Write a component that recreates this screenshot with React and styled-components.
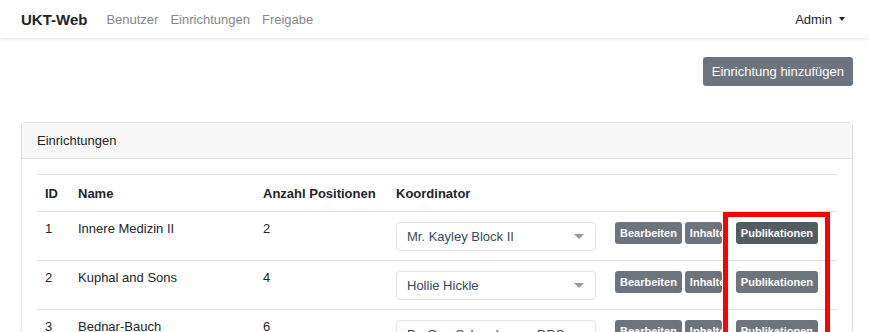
import styled, { createGlobalStyle } from "styled-components";

const GlobalStyle = createGlobalStyle`
  html, body {
    margin: 0;
    padding: 0;
    background: #fff;
    font-family: "Liberation Sans", Arial, sans-serif;
    font-size: 13px;
    color: #212529;
    overflow: hidden;
  }
`;

const Page = styled.div`
  position: relative;
  width: 869px;
  height: 332px;
  overflow: hidden;
`;

const Navbar = styled.nav`
  display: flex;
  align-items: center;
  height: 38px;
  padding: 0 24px 0 21px;
  background: #fff;
  box-shadow: 0 1px 3px rgba(0, 0, 0, 0.12);

  .brand {
    font-size: 15px;
    font-weight: bold;
    color: #212529;
    margin-right: 19px;
  }

  .links {
    display: flex;
    gap: 12px;
    flex: 1;
  }

  a {
    color: #878787;
    text-decoration: none;
    font-size: 13px;
  }
`;

const UserMenu = styled.div`
  display: flex;
  align-items: center;
  gap: 7px;
  font-size: 13px;
  color: #212529;

  &::after {
    content: "";
    border-top: 4px solid #212529;
    border-left: 3.5px solid transparent;
    border-right: 3.5px solid transparent;
  }
`;

const Content = styled.main`
  padding: 19px 16px 0 21px;
`;

const Toolbar = styled.div`
  display: flex;
  justify-content: flex-end;
  margin-bottom: 36px;
`;

const Button = styled.button`
  background: ${(p) => (p.$active ? "#545b62" : "#6c757d")};
  color: #fff;
  border: none;
  border-radius: 3px;
  font-family: "Liberation Sans", Arial, sans-serif;
  font-size: ${(p) => (p.$small ? "11px" : "13px")};
  font-weight: ${(p) => (p.$small ? "bold" : "normal")};
  height: ${(p) => (p.$small ? "22px" : "29px")};
  padding: 0 ${(p) => (p.$small ? "5px" : "9px")};
  white-space: nowrap;
  cursor: pointer;
`;

const ClippedButton = styled(Button)`
  width: 37px;
  padding-right: 0;
  overflow: hidden;
  text-align: left;
  margin-right: 11px;
`;

const Card = styled.section`
  border: 1px solid #dfdfdf;
  border-radius: 4px;
`;

const CardHeader = styled.div`
  height: 35px;
  display: flex;
  align-items: center;
  padding: 0 15px;
  background: #f7f7f7;
  border-bottom: 1px solid #dfdfdf;
`;

const CardBody = styled.div`
  padding: 15px 15px;
`;

const Table = styled.table`
  width: 100%;
  border-collapse: collapse;
  table-layout: fixed;

  th {
    text-align: left;
    font-weight: bold;
    padding: 10px 8px 9px;
    line-height: 17px;
    border-top: 1px solid #dee2e6;
    border-bottom: 1px solid #dee2e6;
  }

  td {
    padding: 10px 8px 9px;
    vertical-align: top;
    border-bottom: 1px solid #dee2e6;
    line-height: 14px;
  }
`;

const Select = styled.div`
  display: flex;
  align-items: center;
  justify-content: space-between;
  box-sizing: border-box;
  width: 200px;
  height: 29px;
  padding: 0 11px 0 10px;
  border: 1px solid #e3e3e3;
  border-radius: 4px;
  color: #35495e;
  font-size: 13px;
  white-space: nowrap;

  &::after {
    content: "";
    border-top: 5px solid #999;
    border-left: 5px solid transparent;
    border-right: 5px solid transparent;
  }
`;

const Actions = styled.div`
  display: flex;
  gap: 3px;
`;

const Annotation = styled.div`
  position: absolute;
  left: 723px;
  top: 212px;
  width: 97px;
  height: 140px;
  border: 5px solid #ff0000;
  pointer-events: none;
`;

const rows = [
  { id: 1, name: "Innere Medizin II", count: 2, coordinator: "Mr. Kayley Block II" },
  { id: 2, name: "Kuphal and Sons", count: 4, coordinator: "Hollie Hickle" },
  { id: 3, name: "Bednar-Bauch", count: 6, coordinator: "Dr. Ona Schamberger DDS" },
];

const App = () => {
  return (
    <Page>
      <GlobalStyle />
      <Navbar>
        <span className="brand">UKT-Web</span>
        <div className="links">
          <a href="#">Benutzer</a>
          <a href="#">Einrichtungen</a>
          <a href="#">Freigabe</a>
        </div>
        <UserMenu>Admin</UserMenu>
      </Navbar>
      <Content>
        <Toolbar>
          <Button>Einrichtung hinzufügen</Button>
        </Toolbar>
        <Card>
          <CardHeader>Einrichtungen</CardHeader>
          <CardBody>
            <Table>
              <colgroup>
                <col style={{ width: 33 }} />
                <col style={{ width: 185 }} />
                <col style={{ width: 133 }} />
                <col style={{ width: 219 }} />
                <col />
              </colgroup>
              <thead>
                <tr>
                  <th>ID</th>
                  <th>Name</th>
                  <th>Anzahl Positionen</th>
                  <th>Koordinator</th>
                  <th></th>
                </tr>
              </thead>
              <tbody>
                {rows.map((r, i) => (
                  <tr key={r.id}>
                    <td>{r.id}</td>
                    <td>{r.name}</td>
                    <td>{r.count}</td>
                    <td>
                      <Select>{r.coordinator}</Select>
                    </td>
                    <td>
                      <Actions>
                        <Button $small>Bearbeiten</Button>
                        <ClippedButton $small>Inhalte</ClippedButton>
                        <Button $small $active={i === 0}>
                          Publikationen
                        </Button>
                      </Actions>
                    </td>
                  </tr>
                ))}
              </tbody>
            </Table>
          </CardBody>
        </Card>
      </Content>
      <Annotation />
    </Page>
  );
};

export default App;
